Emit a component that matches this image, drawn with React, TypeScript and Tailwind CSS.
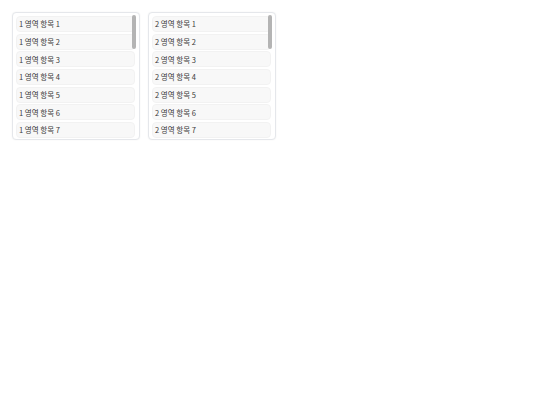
const regions = [1, 2];
const items = Array.from({ length: 7 }, (_, i) => i + 1);

function RegionList({ region }: { region: number }) {
  return (
    <div className="relative w-32 h-32 overflow-hidden rounded border border-gray-200 bg-white pl-[3px] pr-[4px] pt-[3px] shadow-[0_0_2px_rgba(0,0,0,0.05)]">
      <ul className="flex flex-col gap-[1.67px]">
        {items.map((n) => (
          <li
            key={n}
            className="h-4 flex items-center px-[2px] rounded-sm bg-[#f8f8f8] border border-[#f2f2f2] text-[7.5px] text-[#3a3a3a] font-['Noto_Sans_CJK_KR',sans-serif]"
          >
            {region} 영역 항목 {n}
          </li>
        ))}
      </ul>
      {/* scroll thumb */}
      <div className="absolute right-[3px] top-[2px] w-[4px] h-[34px] rounded-full bg-[#b4b4b4]" />
    </div>
  );
}

export default function App() {
  return (
    <div className="flex gap-2 p-3 bg-white min-h-[405px]">
      {regions.map((r) => (
        <RegionList key={r} region={r} />
      ))}
    </div>
  );
}
